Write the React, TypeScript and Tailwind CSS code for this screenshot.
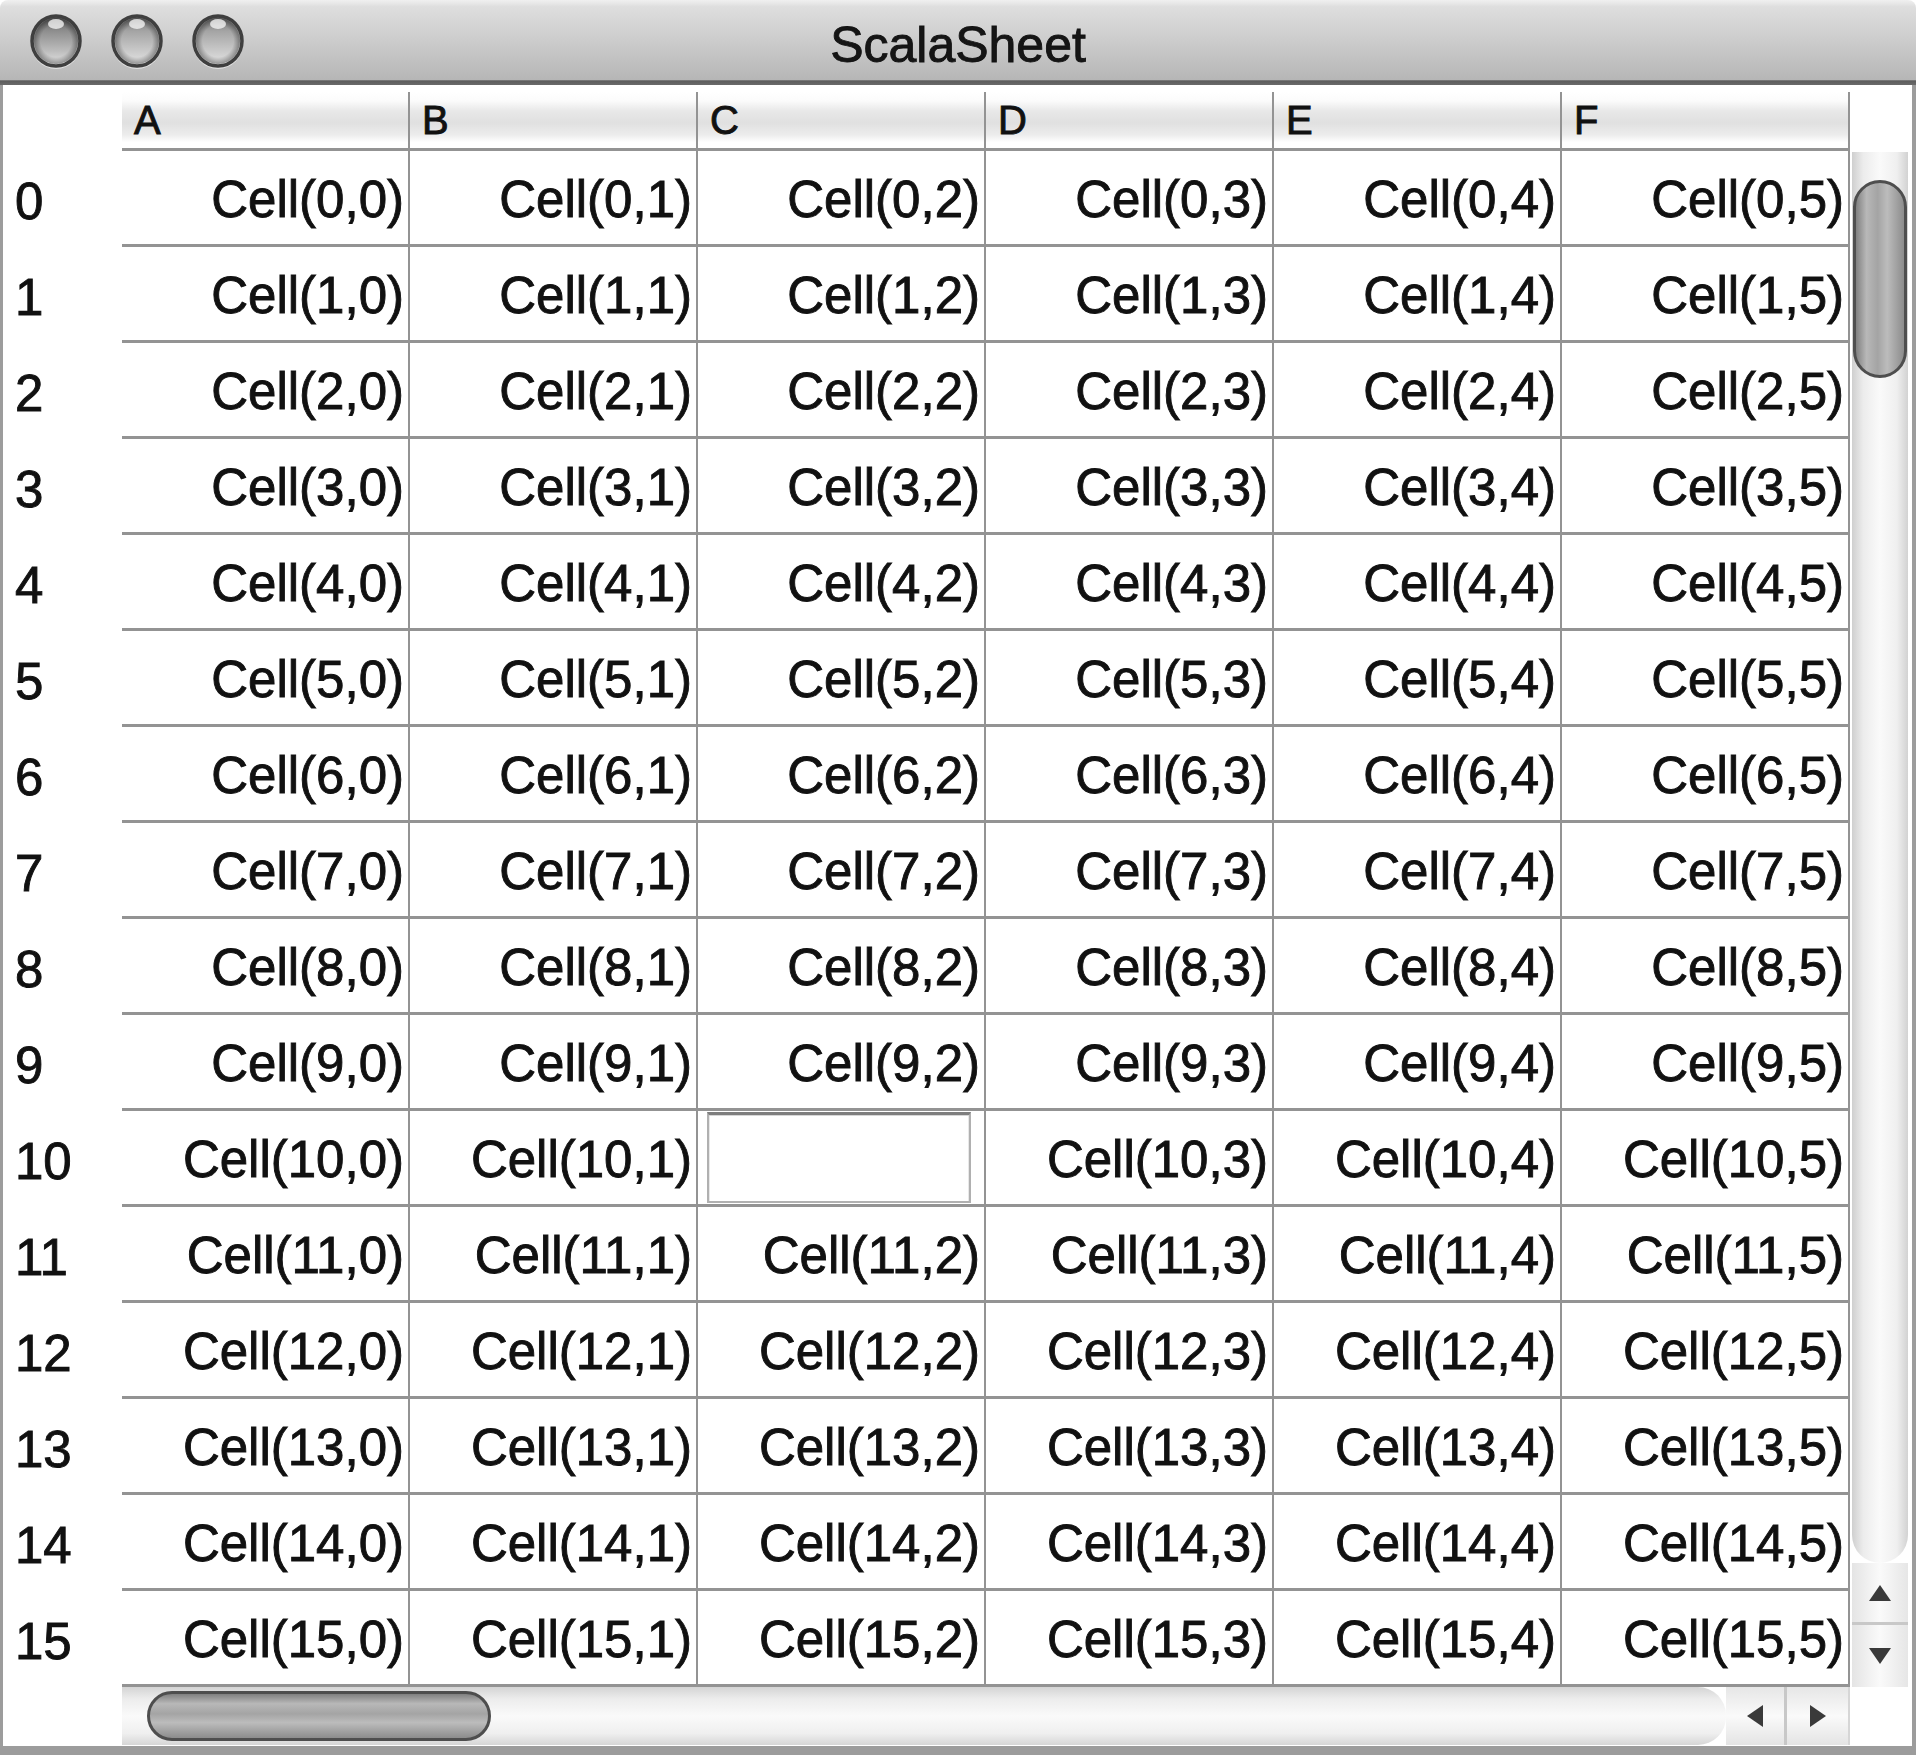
import React from "react";

const COLS = ["A", "B", "C", "D", "E", "F"];
const ROWS = Array.from({ length: 16 }, (_, i) => i);

function Light({ dark }: { dark?: boolean }) {
  const id = dark ? "tlg-d" : "tlg-l";
  return (
    <svg width="54" height="58" viewBox="0 0 54 58">
      <defs>
        <linearGradient id={id} x1="0" y1="0" x2="0" y2="1">
          <stop offset="0" stopColor={dark ? "#5a5a5a" : "#6c6c6c"} />
          <stop offset="0.3" stopColor={dark ? "#8e8e8e" : "#a4a4a4"} />
          <stop offset="0.7" stopColor={dark ? "#bdbdbd" : "#cacaca"} />
          <stop offset="1" stopColor="#e6e6e6" />
        </linearGradient>
        <radialGradient id={id + "r"} cx="0.5" cy="0.5" r="0.5">
          <stop offset="0.7" stopColor="#000" stopOpacity="0" />
          <stop offset="1" stopColor="#000" stopOpacity="0.35" />
        </radialGradient>
      </defs>
      <ellipse cx="27" cy="30" rx="25" ry="26" fill="#f0f0f0" opacity="0.7" />
      <ellipse cx="27" cy="28" rx="24" ry="25" fill={`url(#${id})`} stroke="#3f3f3f" strokeWidth="3.5" />
      <ellipse cx="27" cy="28" rx="22" ry="23" fill={`url(#${id}r)`} />
      <ellipse cx="27" cy="11" rx="8" ry="5" fill="#f2f2f2" opacity="0.8" />
    </svg>
  );
}

function Tri({ dir }: { dir: "up" | "down" | "left" | "right" }) {
  const pts =
    dir === "up"
      ? "11,0 22,16 0,16"
      : dir === "down"
      ? "0,0 22,0 11,16"
      : dir === "left"
      ? "0,11 16,0 16,22"
      : "0,0 16,11 0,22";
  const w = dir === "up" || dir === "down" ? 22 : 16;
  const h = dir === "up" || dir === "down" ? 16 : 22;
  return (
    <svg width={w} height={h} viewBox={`0 0 ${w} ${h}`}>
      <polygon points={pts} fill="#3a3a3a" />
    </svg>
  );
}

export default function App() {
  return (
    <div className="w-[1916px] h-[1755px] bg-white overflow-hidden font-['Liberation_Sans',Arial,sans-serif] text-[#111] [-webkit-text-stroke:0.9px_#111]">
      <div className="h-full flex flex-col rounded-t-[8px] overflow-hidden">
        {/* Title bar */}
        <div className="h-[85px] shrink-0 grid grid-cols-[1fr_auto_1fr] items-center bg-[linear-gradient(to_bottom,#f0f0f0_0%,#dedede_8%,#cbcbcb_50%,#b6b6b6_94%,#5c5c5c_95%,#6a6a6a_100%)]">
          <div className="flex items-center gap-[27px] pl-[29px] pb-[2px]">
            <Light dark />
            <Light />
            <Light />
          </div>
          <div className="text-[50px] leading-none pt-[4px] text-[#151515]">ScalaSheet</div>
          <div />
        </div>

        {/* Body */}
        <div className="flex-1 flex flex-col border-l-[3px] border-r-[4px] border-b-[9px] border-[#9c9c9c] bg-white">
          <div className="h-[7px] shrink-0" />
          <div className="flex">
            {/* table */}
            <div className="flex flex-col w-[1847px]">
              {/* header */}
              <div className="flex h-[59px]">
                <div className="w-[119px] shrink-0" />
                {COLS.map((c) => (
                  <div
                    key={c}
                    className="w-[288px] shrink-0 border-r-2 border-b-[3px] border-[#939393] flex items-center pl-[12px] text-[40px] leading-none bg-[linear-gradient(to_bottom,#ffffff_0%,#fbfbfb_16%,#e8e8e8_34%,#e0e0e0_55%,#ececec_76%,#ffffff_90%)]"
                  >
                    {c}
                  </div>
                ))}
              </div>
              {ROWS.map((r) => (
                <div key={r} className="flex h-[96px]">
                  <div className="w-[119px] shrink-0 flex items-center pl-[12px] pt-[4px] text-[51px] leading-none">
                    {r}
                  </div>
                  {COLS.map((c, ci) => (
                    <div
                      key={c}
                      className="w-[288px] shrink-0 border-r-2 border-b-[3px] border-[#939393] flex items-center justify-end pr-[4px] pt-[4px] text-[51px] leading-none whitespace-nowrap"
                    >
                      {r === 10 && ci === 2 ? (
                        <div className="self-stretch w-full mx-[9px] -mt-[3px] mb-[1px] border-2 border-t-[3px] border-[#b0b0b0] border-t-[#7e7e7e] shadow-[inset_0_1px_0_#d6d6d6,inset_1px_0_0_#e8e8e8,inset_-1px_0_0_#e8e8e8] bg-white" />
                      ) : (
                        `Cell(${r},${ci})`
                      )}
                    </div>
                  ))}
                </div>
              ))}
            </div>
            {/* vertical scrollbar */}
            <div className="w-[62px] shrink-0 flex flex-col">
              <div className="h-[60px] shrink-0" />
              <div className="flex-1 flex flex-col pl-[2px] pr-[4px]">
                <div className="flex-1 flex flex-col pt-[28px] rounded-b-[28px] bg-[linear-gradient(to_right,#cfcfcf_0%,#ececec_20%,#fafafa_50%,#efefef_80%,#d2d2d2_100%)]">
                  <div className="h-[198px] mx-[1px] rounded-full border-[3px] border-[#4e4e4e] bg-[linear-gradient(to_right,#808080_0%,#b8b8b8_22%,#a4a4a4_45%,#bcbcbc_65%,#8c8c8c_100%)]" />
                </div>
                <div className="h-[62px] shrink-0 flex items-center justify-center border-b-[3px] border-[#c8c8c8] bg-[linear-gradient(to_right,#e4e4e4,#fafafa_50%,#e6e6e6)]">
                  <Tri dir="up" />
                </div>
                <div className="h-[62px] shrink-0 flex items-center justify-center bg-[linear-gradient(to_right,#e4e4e4,#fafafa_50%,#e6e6e6)]">
                  <Tri dir="down" />
                </div>
              </div>
            </div>
          </div>
          {/* horizontal scrollbar row */}
          <div className="flex-1 flex">
            <div className="w-[119px] shrink-0" />
            <div className="w-[1728px] shrink-0 flex pb-[1px]">
              <div className="flex-1 flex items-center pl-[25px] rounded-r-[28px] bg-[linear-gradient(to_bottom,#d4d4d4_0%,#ececec_20%,#fafafa_50%,#efefef_80%,#d6d6d6_100%)]">
                <div className="w-[344px] h-[50px] rounded-full border-[3px] border-[#4e4e4e] bg-[linear-gradient(to_bottom,#808080_0%,#b8b8b8_22%,#a4a4a4_45%,#bcbcbc_65%,#8c8c8c_100%)]" />
              </div>
              <div className="w-[61px] shrink-0 flex items-center justify-center border-r-[3px] border-[#c8c8c8] bg-[linear-gradient(to_bottom,#e6e6e6,#fafafa_50%,#e4e4e4)]">
                <Tri dir="left" />
              </div>
              <div className="w-[63px] shrink-0 flex items-center justify-center border-r-2 border-[#d6d6d6] bg-[linear-gradient(to_bottom,#e6e6e6,#fafafa_50%,#e4e4e4)]">
                <Tri dir="right" />
              </div>
            </div>
            <div className="w-[62px] shrink-0" />
          </div>
        </div>
      </div>
    </div>
  );
}
